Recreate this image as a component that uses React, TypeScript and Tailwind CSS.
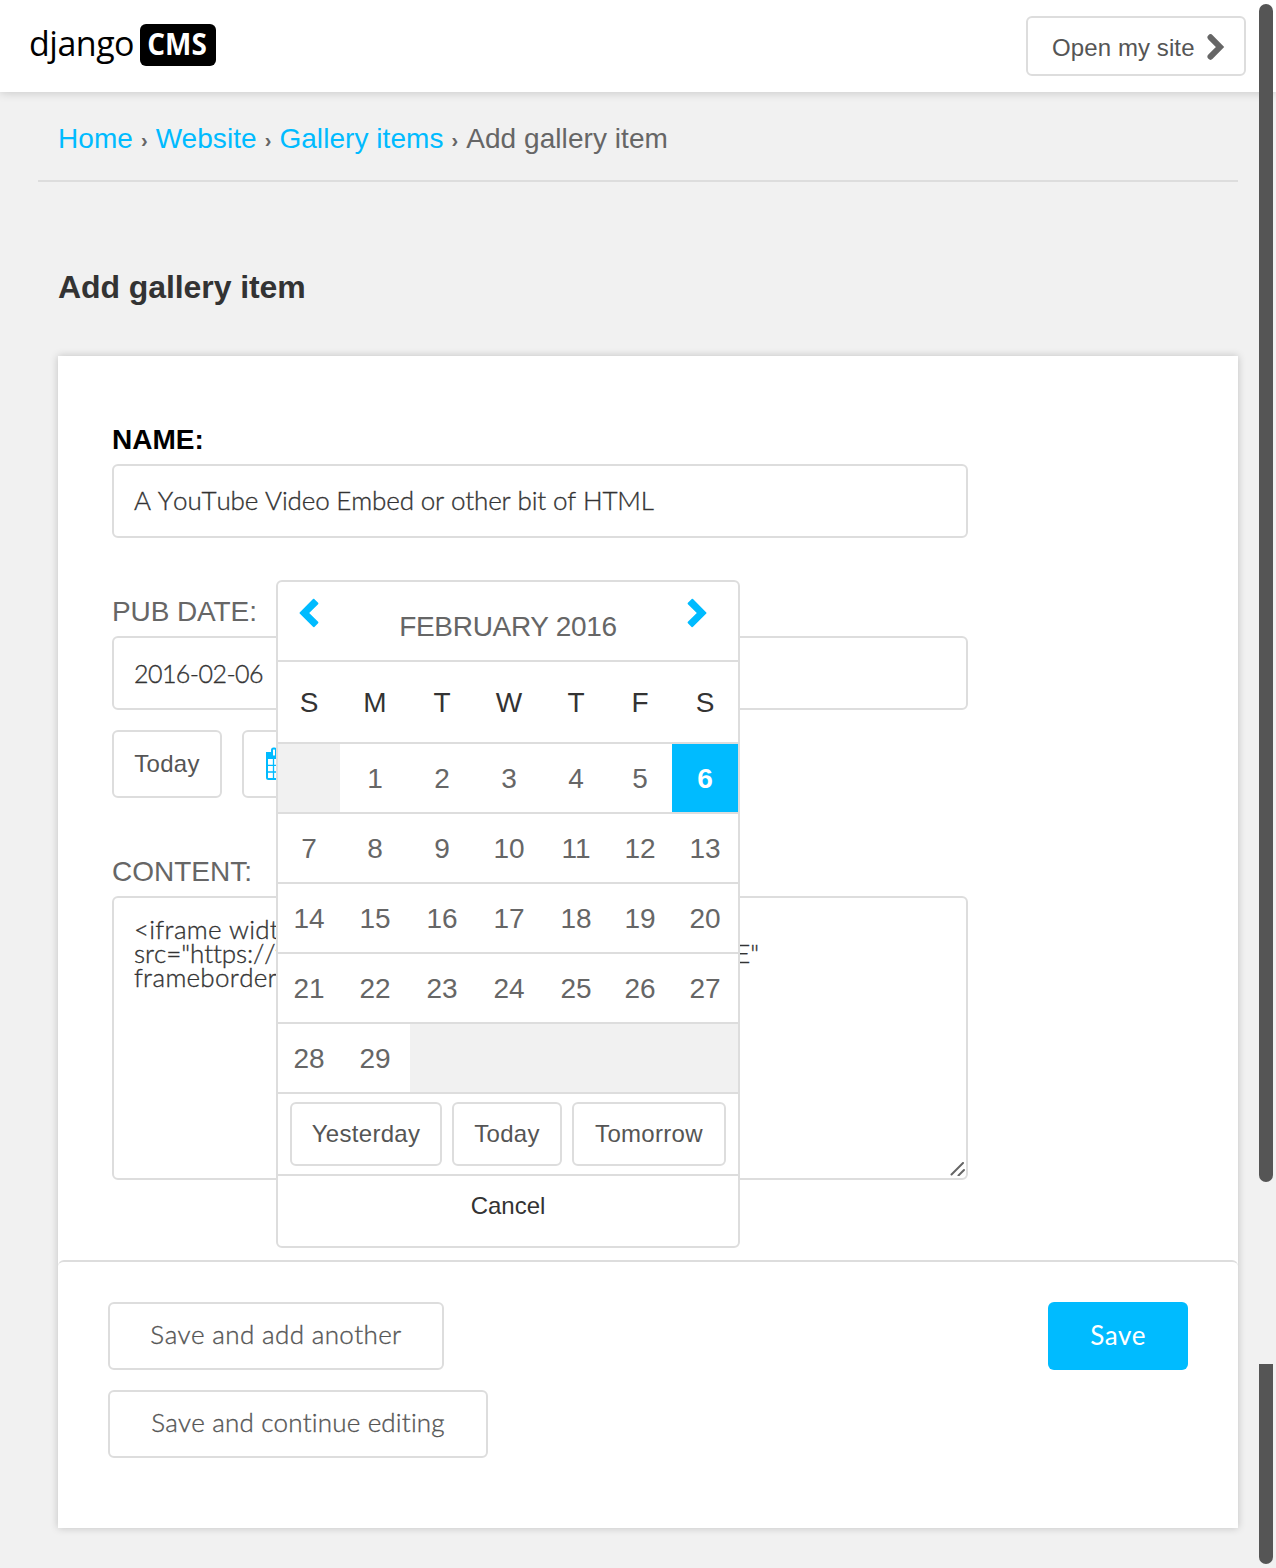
import type { ReactNode } from 'react';

const weekdays = ['S', 'M', 'T', 'W', 'T', 'F', 'S'];
const weeks: (number | null)[][] = [
  [null, 1, 2, 3, 4, 5, 6],
  [7, 8, 9, 10, 11, 12, 13],
  [14, 15, 16, 17, 18, 19, 20],
  [21, 22, 23, 24, 25, 26, 27],
  [28, 29, null, null, null, null, null],
];
const columns = 'grid grid-cols-[62px_70px_64px_70px_64px_64px_66px]';
const sans = "font-['Liberation_Sans',Arial,sans-serif]";
const light = "font-['Lato',sans-serif] font-light [-webkit-text-stroke:0.35px] [font-kerning:none] [font-variant-ligatures:none]";

function Crumb({ children }: { children: ReactNode }) {
  return <a className="tracking-[0.06px] text-[#00bbff]">{children}</a>;
}

function Sep() {
  return <span className="w-[22.7px] pt-px text-center text-[20px] font-bold">›</span>;
}

function Label({ children, className = '' }: { children: ReactNode; className?: string }) {
  return <div className={`h-8 leading-8 text-[28px] whitespace-nowrap ${className}`}>{children}</div>;
}

function SmallButton({ children, className }: { children: ReactNode; className: string }) {
  return (
    <button className={`flex shrink-0 items-center justify-center rounded-md border-2 border-[#ddd] bg-white text-2xl tracking-[0.3px] text-[#555] ${className}`}>
      {children}
    </button>
  );
}

function CalendarIcon() {
  return (
    <svg width="30" height="34" viewBox="0 0 30 34" fill="none" stroke="#00bbff" strokeWidth="2">
      <rect x="2" y="6" width="27" height="26" rx="1.5" />
      <path d="M2 6h27v5H2z" fill="#00bbff" />
      <path d="M8.5 11v21M15 11v21M22 11v21M2 18.3h27M2 25h27" strokeWidth="1.3" />
      <rect x="7" y="1.5" width="4" height="8" rx="1.5" fill="#fff" />
      <rect x="20" y="1.5" width="4" height="8" rx="1.5" fill="#fff" />
    </svg>
  );
}

function Arrow({ flip = false }: { flip?: boolean }) {
  return (
    <svg width="20" height="30" viewBox="0 0 20 30" className={flip ? '-scale-x-100' : ''}>
      <path d="M5 .8 .9 4.8Q.2 5.5.9 6.2L9.8 15 .9 23.8Q.2 24.5.9 25.2L4.6 28.9Q5.3 29.5 6 28.8L19.3 15.6Q19.8 15 19.3 14.4L6 1.1Q5.4.5 5 .8Z" fill="#00bbff" />
    </svg>
  );
}

function DatePicker() {
  return (
    <div className="absolute left-[276px] top-[580px] z-10 w-[464px] h-[668px] rounded-md border-2 border-[#ddd] bg-white overflow-hidden text-[28px]">
      <div className="flex h-20 justify-between border-b-2 border-[#ddd] pl-[21px] pr-[31px] pt-4 text-[#666]">
        <Arrow flip />
        <div className="pl-[10px] pt-[13px] leading-8 tracking-[-0.3px]">FEBRUARY 2016</div>
        <Arrow />
      </div>
      <div className={`${columns} h-[82px] border-b-2 border-[#ddd] text-center leading-[81px] text-[#333]`}>
        {weekdays.map((d, i) => <div key={i}>{d}</div>)}
      </div>
      {weeks.map((week, r) => (
        <div key={r} className={`${columns} h-[70px] border-b-2 border-[#ddd] text-center leading-[69px] text-[#666]`}>
          {week.map((d, i) => (
            <div key={i} className={d === null ? 'h-[68px] bg-[#f1f1f1]' : d === 6 ? 'h-[68px] bg-[#00bbff] font-bold text-white' : 'h-[68px]'}>{d}</div>
          ))}
        </div>
      ))}
      <div className="flex h-[82px] gap-2.5 border-b-2 border-[#ddd] pl-3 pt-2">
        <SmallButton className="h-16 w-[152px]">Yesterday</SmallButton>
        <SmallButton className="h-16 w-[110px]">Today</SmallButton>
        <SmallButton className="h-16 w-[154px]">Tomorrow</SmallButton>
      </div>
      <div className="pt-[14px] text-center text-2xl leading-8 text-[#333]">Cancel</div>
    </div>
  );
}

export default function App() {
  return (
    <div className={`relative h-[1568px] w-[1276px] overflow-hidden bg-[#f1f1f1] text-[#666] ${sans}`}>
      <header className="flex h-[92px] items-start justify-between bg-white pl-[29px] pr-[30px] shadow-[0_0_10px_rgba(0,0,0,0.2)]">
        <div className="flex pt-6 font-['Open_Sans',sans-serif] text-black">
          <span className="w-[111px] text-[34px] leading-[38px] tracking-[-0.5px]">django</span>
          <span className="flex h-[42px] w-[76px] items-center justify-center rounded-md bg-black text-white">
            <span className="mb-1 mr-px scale-x-90 text-[31px] font-bold leading-9">CMS</span>
          </span>
        </div>
        <button className="mt-4 flex h-[60px] w-[220px] items-center rounded-md border-2 border-[#ddd] pl-6 text-2xl text-[#555]">
          <span className="w-[155px] pt-[3px] text-left tracking-[0.1px] whitespace-nowrap">Open my site</span>
          <svg width="20" height="30" viewBox="0 0 20 30" fill="none" stroke="#666" strokeWidth="6">
            <path d="M3.5 6.3 13 16 3.5 25.7" strokeLinecap="round" />
          </svg>
        </button>
      </header>

      <nav className="ml-[38px] flex h-[90px] w-[1200px] items-center border-b-2 border-[#ddd] pl-5 pt-1.5 text-[28px] whitespace-nowrap">
        <Crumb>Home</Crumb><Sep />
        <Crumb>Website</Crumb><Sep />
        <Crumb>Gallery items</Crumb><Sep />
        <span className="tracking-[0.06px]">Add gallery item</span>
      </nav>

      <h1 className="ml-[58px] mt-[85px] h-10 text-[32px] font-bold leading-10 tracking-[-0.08px] text-[#333]">Add gallery item</h1>

      <main className="ml-[58px] mt-[49px] flex h-[1172px] w-[1180px] flex-col bg-white shadow-[0_0_8px_rgba(0,0,0,0.2)]">
        <div className="h-[904px] shrink-0 pl-[54px] pt-[68px]">
          <Label className="font-bold text-black">NAME:</Label>
          <div className={`mt-2 h-[74px] w-[856px] rounded-md border-2 border-[#ddd] pl-5 text-[26px] leading-[69px] tracking-[-0.16px] text-[#333] ${light}`}>
            <span>A YouTube Video Embed or other bit of HTML</span>
          </div>
          <Label className="mt-[58px] tracking-[-0.1px]">PUB DATE:</Label>
          <div className={`mt-2 h-[74px] w-[856px] rounded-md border-2 border-[#ddd] pl-5 text-[25px] leading-[70px] tracking-[-0.55px] text-[#333] ${light}`}>2016-02-06</div>
          <div className="mt-5 flex gap-5">
            <SmallButton className="h-[68px] w-[110px] pb-px">Today</SmallButton>
            <SmallButton className="h-[68px] w-[76px]"><CalendarIcon /></SmallButton>
          </div>
          <Label className="mt-[58px]">CONTENT:</Label>
          <div className={`relative mt-2 h-[284px] w-[856px] rounded-md border-2 border-[#ddd] pl-5 pt-[19px] text-[26px] leading-6 whitespace-nowrap text-[#333] ${light}`}>
            <div className="tracking-[0.25px]">&lt;iframe widt</div>
            <div className="flex w-[625px] justify-between tracking-[-0.1px]"><span>src="https://v</span><span>E"</span></div>
            <div className="tracking-[0.25px]">frameborder</div>
            <svg className="absolute bottom-0.5 right-px" width="15" height="14" viewBox="0 0 15 14" stroke="#666" strokeWidth="2" strokeLinecap="round">
              <path d="M1.5 12.5 13 1M8.5 13.5 14 8" />
            </svg>
          </div>
        </div>
        <footer className={`flex grow items-start justify-between rounded-t-md border-t-2 border-[#ddd] px-[50px] pt-10 text-[26px] text-[#555] ${light}`}>
          <div className="flex flex-col items-start gap-5">
            <button className="h-[68px] w-[336px] rounded-md border-2 border-[#ddd] pb-[3px] tracking-[0.36px]">Save and add another</button>
            <button className="h-[68px] w-[380px] rounded-md border-2 border-[#ddd] pb-[3px] tracking-[0.17px]">Save and continue editing</button>
          </div>
          <button className="h-[68px] w-[140px] rounded-md bg-[#00bbff] pb-0.5 font-normal text-white tracking-[0.3px] [-webkit-text-stroke:0]">Save</button>
        </footer>
      </main>

      <DatePicker />
      <div className="absolute left-[1259px] top-1 h-[1178px] w-3.5 rounded-full bg-[#555]" />
      <div className="absolute left-[1259px] top-[1364px] h-[200px] w-3.5 rounded-b-full bg-[#555]" />
    </div>
  );
}
